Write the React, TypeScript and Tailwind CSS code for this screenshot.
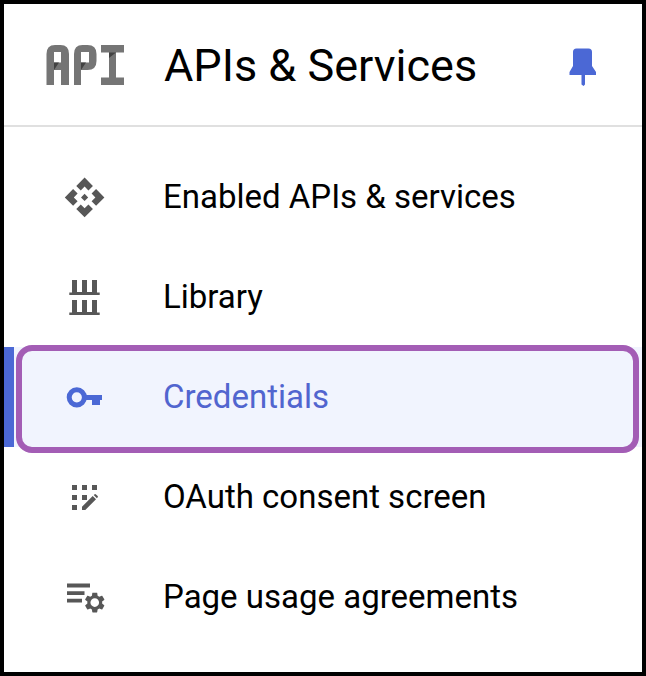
import type { ReactNode } from "react";

function ApiLogo() {
  return (
    <svg viewBox="0 1 80 44" className="h-11 w-20 shrink-0" aria-hidden="true">
      <g fill="#757575">
        <path
          fillRule="evenodd"
          d="M2.5 41V10Q2.5 1 11 1H16.5Q25 1 25 10V41H17V26H10V41ZM10 18.5H17V8H10Z"
        />
        <path
          fillRule="evenodd"
          d="M30 41V10Q30 1 38.500 1H43.500Q52.500 1 52.500 10V17Q52.500 26 43.500 26H37V41ZM37 18.500H45V8H37Z"
        />
        <path d="M57 1H80V8.500H72V33.500H80V41H57V33.500H65V8.500H57Z" />
      </g>
      <path fill="#424242" d="M10 18.500H15L10 26ZM37 18.500H42L37 26ZM65 8.500H72L65 14Z" />
    </svg>
  );
}

function PinIcon() {
  return (
    <svg viewBox="0 0 28 38" className="h-[38px] w-7" aria-hidden="true">
      <path
        fill="#4b68d5"
        d="M7.500 0.500H19.500Q23 0.500 23 4V18L27 24V27H16V36.500L14.500 38L12.500 36.500V27H0.500V24L4 18V4Q4 0.500 7.500 0.500Z"
      />
    </svg>
  );
}

function Icon({ children }: { children: ReactNode }) {
  return (
    <svg viewBox="0 0 44 44" className="size-11 shrink-0" fill="currentColor" aria-hidden="true">
      {children}
    </svg>
  );
}

const items = [
  {
    label: "Enabled APIs & services",
    icon: (
      <g transform="translate(1 0.800) scale(1.800)">
        <path d="M14 12l-2 2-2-2 2-2 2 2zm-2-6l2.120 2.120 2.500-2.500L12 1 7.380 5.620l2.500 2.500L12 6zm-6 6l2.120-2.120-2.500-2.500L1 12l4.620 4.620 2.500-2.500L6 12zm12 0l-2.120 2.120 2.500 2.500L23 12l-4.620-4.620-2.500 2.500L18 12zm-6 6l-2.120-2.120-2.500 2.500L12 23l4.620-4.620-2.500-2.500L12 18z" />
      </g>
    ),
  },
  {
    label: "Library",
    icon: (
      <path d="M10 5H15V17H20V5H25V17H30V5H35V17.500H37.700V20H7.300V17.500H10ZM10 25H15V37H20V25H25V37H30V25H35V37.500H37.700V40H7.300V37.500H10Z" />
    ),
  },
  {
    label: "Credentials",
    active: true,
    icon: (
      <>
        <circle cx="14.800" cy="22.300" r="7.600" fill="none" stroke="currentColor" strokeWidth="5" />
        <path d="M23 20H40V25H38V30H30V25H23Z" />
      </>
    ),
  },
  {
    label: "OAuth consent screen",
    icon: (
      <>
        <path d="M10 10h5v5h-5zM20 10h5v5h-5zM30 10h5v5h-5zM10 20h5v5h-5zM20 20h5v5h-5zM10 30h5v5h-5z" />
        <path d="M20 35V31.700L30.700 21L34 24.300L23.300 35ZM31.700 20L32.700 19.200Q33.300 18.800 34 19.400L35.700 21.100Q36.200 21.700 35.700 22.300L34.900 23.200Z" />
      </>
    ),
  },
  {
    label: "Page usage agreements",
    icon: (
      <>
        <path d="M5 8.600H28V12.400H5ZM5 16.200H22.500V20H5ZM5 23.800H20V27.600H5Z" />
        <g transform="translate(20.400 15.200) scale(1.030)">
          <path d="M19.140 12.940c.04-.3.06-.61.06-.94 0-.32-.02-.64-.07-.94l2.030-1.580c.18-.14.23-.41.12-.61l-1.920-3.320c-.12-.22-.37-.29-.59-.22l-2.390.96c-.5-.38-1.030-.7-1.620-.94l-.36-2.540c-.04-.24-.24-.41-.48-.41h-3.840c-.24 0-.43.17-.47.41l-.36 2.540c-.59.24-1.130.57-1.620.94l-2.390-.96c-.22-.08-.47 0-.59.22L2.740 8.870c-.12.21-.08.47.12.61l2.030 1.580c-.05.3-.09.63-.09.94s.02.64.07.94l-2.030 1.580c-.18.14-.23.41-.12.61l1.920 3.320c.12.22.37.29.59.22l2.390-.96c.5.38 1.030.7 1.620.94l.36 2.540c.05.24.24.41.48.41h3.840c.24 0 .44-.17.47-.41l.36-2.540c.59-.24 1.130-.56 1.620-.94l2.390.96c.22.08.47 0 .59-.22l1.920-3.320c.12-.22.07-.47-.12-.61l-2.010-1.580zM12 16.200a4.200 4.200 0 1 1 0-8.400a4.200 4.200 0 0 1 0 8.400z" />
        </g>
      </>
    ),
  },
];

export default function App() {
  return (
    <div className="min-h-screen border-4 border-black bg-white font-[Roboto,sans-serif] text-black">
      <header className="flex h-[123px] items-center border-b-2 border-[#e0e0e0] pt-1 pr-[45px] pl-10">
        <ApiLogo />
        <h1 className="ml-10 flex-1 pb-0.5 text-[45px] leading-[52px]">APIs &amp; Services</h1>
        <button type="button" aria-label="Unpin APIs & Services">
          <PinIcon />
        </button>
      </header>
      <nav aria-label="APIs & Services" className="pt-5">
        <ul>
          {items.map((item) => (
            <li key={item.label} className="relative">
              <a
                href="#"
                aria-current={item.active ? "page" : undefined}
                className={
                  item.active
                    ? "flex h-25 items-center gap-[57px] border-l-10 border-[#4b68d5] bg-[#f1f4fe] pl-12 text-[#4b68d5]"
                    : "flex h-25 items-center gap-[57px] pl-[58px] text-[#575757]"
                }
              >
                <Icon>{item.icon}</Icon>
                <span
                  className={
                    item.active
                      ? "text-[33px] leading-10 text-[#5165cf]"
                      : "text-[33px] leading-10 text-black"
                  }
                >
                  {item.label}
                </span>
              </a>
              {item.active && (
                <span className="pointer-events-none absolute -top-0.5 right-[3px] -bottom-1.5 left-3 rounded-2xl border-6 border-[#a35db5]" />
              )}
            </li>
          ))}
        </ul>
      </nav>
    </div>
  );
}
